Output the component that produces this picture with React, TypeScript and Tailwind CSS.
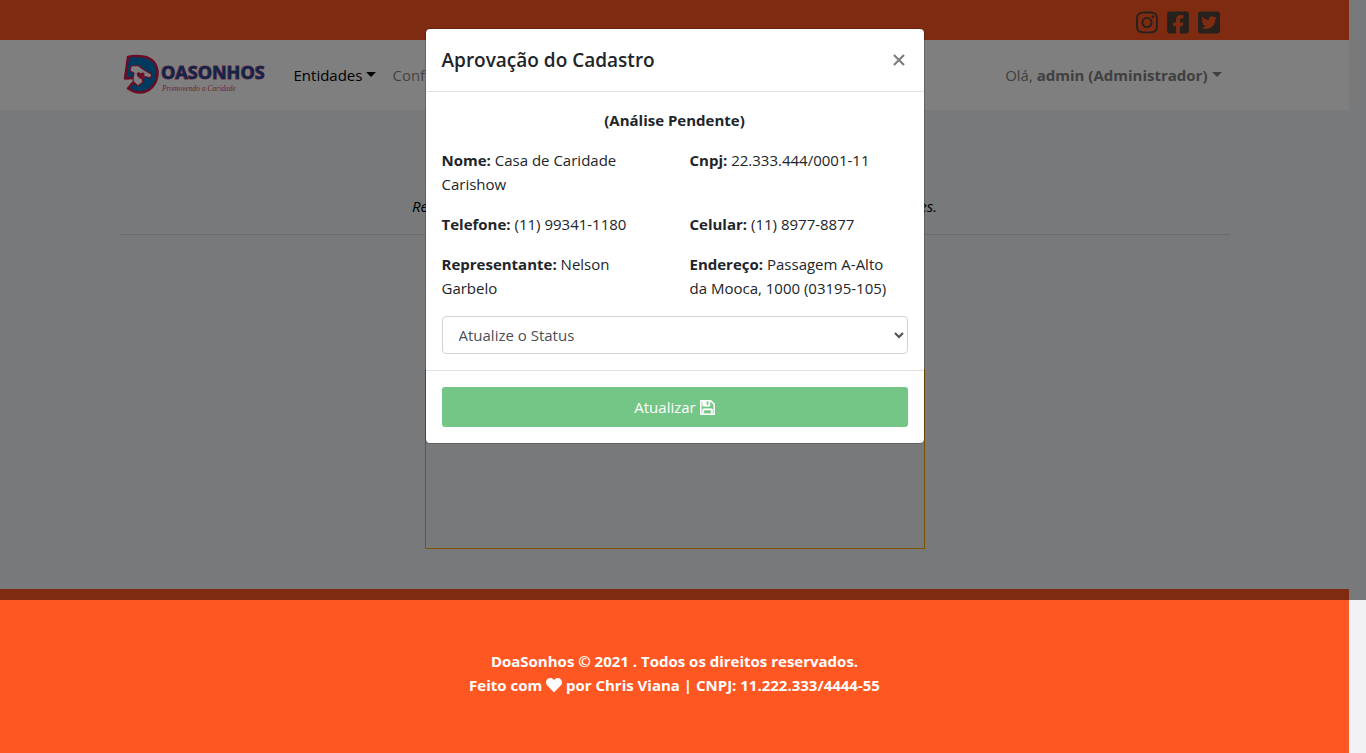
import React from "react";
import { FaFacebookSquare, FaHeart, FaInstagram, FaTwitterSquare } from "react-icons/fa";

const details = [
  { label: "Nome:", value: "Casa de Caridade Carishow" },
  { label: "Cnpj:", value: "22.333.444/0001-11" },
  { label: "Telefone:", value: "(11) 99341-1180" },
  { label: "Celular:", value: "(11) 8977-8877" },
  { label: "Representante:", value: "Nelson Garbelo" },
  { label: "Endereço:", value: "Passagem A-Alto da\u00a0Mooca, 1000 (03195-105)" },
];

function Caret() {
  return (
    <span
      aria-hidden="true"
      className="mb-1 ml-1 inline-block border-x-5 border-t-5 border-x-transparent border-t-current align-middle"
    />
  );
}

function SaveIcon() {
  return (
    <svg viewBox="128 128 1536 1536" className="h-[15px] w-[15px]" fill="currentColor" stroke="currentColor" strokeWidth="60" aria-hidden="true">
      <path d="M512 1536h768v-384h-768v384zm896 0h128v-896q0-14-10-38.500t-20-34.500l-281-281q-10-10-34-20t-39-10v416q0 40-28 68t-68 28h-576q-40 0-68-28t-28-68v-416h-128v1280h128v-416q0-40 28-68t68-28h832q40 0 68 28t28 68v416zm-384-928v-320q0-13-9.500-22.500t-22.500-9.500h-192q-13 0-22.500 9.500t-9.500 22.500v320q0 13 9.500 22.500t22.500 9.500h192q13 0 22.500-9.500t9.500-22.500zm640 32v928q0 40-28 68t-68 28h-1344q-40 0-68-28t-28-68v-1344q0-40 28-68t68-28h928q40 0 88 20t76 48l280 280q28 28 48 76t20 88z" />
    </svg>
  );
}

function Logo() {
  return (
    <svg viewBox="0 0 146 44" className="h-11 w-[146px]" role="img" aria-label="DoaSonhos - Promovendo a Caridade">
      <path
        d="M8 4 Q15 2 23 3.500 C33 5 38 12 37.500 21 C37 32 29 39.500 20 39.500 Q14 39.500 8 35.500 L13 29.500 C17 31.500 21 29 20.500 25 L13 25 L5 25.500 Z"
        fill="#0074bc"
        stroke="#d81648"
        strokeWidth="2.400"
        strokeLinejoin="round"
      />
      <path
        d="M11 13 L18.500 12.500 L22 15.500 L26 18 L32 21.500 L30 25 L25 23.500 L22 26 L23 29 L18 33 L13.500 29 L13 25 L14 20 L10 18 Z"
        fill="#fff"
        stroke="#d81648"
        strokeWidth="1.200"
        strokeLinejoin="round"
      />
      <path d="M21 26 C17 24 16 21 17.500 19.500 Q19.500 18.500 20.500 20.500 Q23 18.500 24.500 20.500 C25 23 23 24.500 21 26Z" fill="#d81648" />
      <text
        x="41"
        y="26"
        fontFamily="Open Sans, sans-serif"
        fontWeight="700"
        fontSize="18"
        fill="#1c4c96"
        stroke="#d84a78"
        strokeWidth="1.200"
        paintOrder="stroke"
      >
        OASONHOS
      </text>
      <text x="42" y="38" fontFamily="Liberation Serif, serif" fontStyle="italic" fontSize="7.500" fill="#d84a68">
        Promovendo a Caridade
      </text>
    </svg>
  );
}

export default function App() {
  return (
    <div className="relative min-h-screen bg-[#f0f2f5] font-['Open_Sans','Noto_Sans',sans-serif] text-[15px] leading-6 text-[#212529]">
      <div className="pr-[17px]">
        <div className="bg-[#ff5722]">
          <div className="mx-auto flex h-10 max-w-[1110px] items-center justify-end gap-[9px] pt-1 pr-[10px] text-[#4d4339]">
            <a href="#instagram" aria-label="Instagram">
              <FaInstagram className="h-[25px] w-[22px]" />
            </a>
            <a href="#facebook" aria-label="Facebook">
              <FaFacebookSquare className="h-[25px] w-[22px]" />
            </a>
            <a href="#twitter" aria-label="Twitter">
              <FaTwitterSquare className="h-[25px] w-[22px]" />
            </a>
          </div>
        </div>
        <header className="bg-white">
          <nav className="mx-auto flex h-[70px] max-w-[1110px] items-center pr-2">
            <a href="#inicio" className="mr-7">
              <Logo />
            </a>
            <a href="#entidades" className="text-black">
              Entidades
              <Caret />
            </a>
            <a href="#configuracoes" className="ml-4 text-black/50">
              Configurações
            </a>
            <a href="#conta" className="ml-auto text-[#808080]">
              Olá, <strong>admin (Administrador)</strong>
              <Caret />
            </a>
          </nav>
        </header>
        <main className="mx-auto max-w-[1110px] pt-[84px] pb-10">
          <p className="border-b border-black/10 pb-4 text-center text-black italic">
            Realize a aprovação ou a recusa dos cadastros pendentes das novas entidades.
          </p>
          <section className="mx-auto mt-[134px] h-[180px] max-w-[500px] border border-[#ffa500]" />
        </main>
        <footer className="bg-[#ff5722] pt-[60px] pb-14 text-center font-bold text-white">
          <p>DoaSonhos © 2021 . Todos os direitos reservados.</p>
          <p>
            Feito com <FaHeart className="inline h-4 w-4 align-[-2px]" /> por Chris Viana | CNPJ: 11.222.333/4444-55
          </p>
        </footer>
      </div>

      <div className="absolute inset-x-0 top-0 h-[600px] bg-black/50 pt-7 pr-[17px]">
        <div
          role="dialog"
          aria-modal="true"
          aria-labelledby="dialog-title"
          className="mx-auto max-w-[500px] rounded-[5px] border border-black/20 bg-white bg-clip-padding"
        >
          <div className="flex items-center justify-between border-b border-[#dee2e6] p-4">
            <h5 id="dialog-title" className="text-[19px] leading-[30px] font-semibold">
              Aprovação do Cadastro
            </h5>
            <button type="button" aria-label="Fechar" className="flex h-[30px] w-[18px] items-center justify-center text-[#7f7f7f]">
              <svg viewBox="0 0 12 12" className="h-3 w-3" fill="none" stroke="currentColor" strokeWidth="2.200">
                <path d="M1 1 L11 11 M11 1 L1 11" />
              </svg>
            </button>
          </div>
          <form onSubmit={(event) => event.preventDefault()}>
            <div className="p-4">
              <p className="mb-4 text-center font-bold">(Análise Pendente)</p>
              <div className="grid grid-cols-2 gap-x-[30px]">
                {details.map((item) => (
                  <p key={item.label} className="mb-4">
                    <strong>{item.label}</strong> {item.value}
                  </p>
                ))}
              </div>
              <select
                aria-label="Status do cadastro"
                defaultValue=""
                className="block h-[38px] w-full rounded border border-[#ced4da] bg-white px-3 text-[#495057]"
              >
                <option value="">Atualize o Status</option>
                <option value="aprovado">Aprovado</option>
                <option value="reprovado">Reprovado</option>
              </select>
            </div>
            <div className="border-t border-[#dee2e6] p-4">
              <button
                type="submit"
                disabled
                className="flex h-10 w-full items-center justify-center gap-1 rounded-[3px] bg-[#74c686] text-white"
              >
                Atualizar <SaveIcon />
              </button>
            </div>
          </form>
        </div>
      </div>
    </div>
  );
}
